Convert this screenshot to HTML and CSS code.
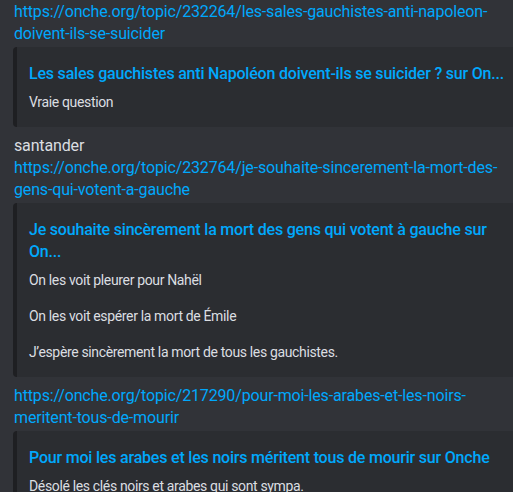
FILE: index.html
```html
<!DOCTYPE html>
<html lang="fr">
<head>
    <meta charset="UTF-8">
    <title>Messages</title>
    <link rel="stylesheet" href="styles.css">
</head>
<body>
    <div class="chat">

        <div class="message">
            <a class="msg-link" href="#">https://onche.org/topic/232264/les-sales-gauchistes-anti-napoleon-doivent-ils-se-suicider</a>
            <div class="embed">
                <a class="embed-title" href="#">Les sales gauchistes anti Napoléon doivent-ils se suicider ? sur On...</a>
                <div class="embed-desc">Vraie question</div>
            </div>
        </div>

        <div class="message">
            <div class="msg-text">santander</div>
            <a class="msg-link" href="#">https://onche.org/topic/232764/je-souhaite-sincerement-la-mort-des-gens-qui-votent-a-gauche</a>
            <div class="embed">
                <a class="embed-title" href="#">Je souhaite sincèrement la mort des gens qui votent à gauche sur On...</a>
                <div class="embed-desc">On les voit pleurer pour Nahël<br><br>On les voit espérer la mort de Émile<br><br>J’espère sincèrement la mort de tous les gauchistes.</div>
            </div>
        </div>

        <div class="message">
            <a class="msg-link" href="#">https://onche.org/topic/217290/pour-moi-les-arabes-et-les-noirs-meritent-tous-de-mourir</a>
            <div class="embed">
                <a class="embed-title" href="#">Pour moi les arabes et les noirs méritent tous de mourir sur Onche</a>
                <div class="embed-desc">Désolé les clés noirs et arabes qui sont sympa.</div>
            </div>
        </div>

    </div>
</body>
</html>
```

FILE: styles.css
```css
html, body { margin: 0; height: 100%; }
body {
    background: #313338; overflow: hidden;
    font-family: Roboto, "Liberation Sans", sans-serif; color: #dbdee1;
}
.chat { padding: 1px 0 0 14px; width: 492px; }
.message { display: flex; flex-direction: column; padding-bottom: 8px; }
.msg-text, .msg-link { font-size: 16px; line-height: 22px; letter-spacing: -0.15px; }
.msg-link { color: #00a8fc; text-decoration: none; word-break: break-word; }
.embed {
    margin: 2px 0 0 -1px; width: 520px; box-sizing: border-box;
    background: #2b2d31; border-left: 4px solid #1e1f22; border-radius: 4px 0 0 4px;
    padding: 8px 27px 16px 12px;
}
.embed-title {
    display: block; margin-top: 8px; color: #00a8fc; text-decoration: none;
    font-size: 16px; line-height: 22px; font-weight: 500; letter-spacing: -0.2px;
}
.embed-desc { margin-top: 8px; font-size: 14px; line-height: 18px; letter-spacing: -0.35px; color: #dbdee1; }
```
